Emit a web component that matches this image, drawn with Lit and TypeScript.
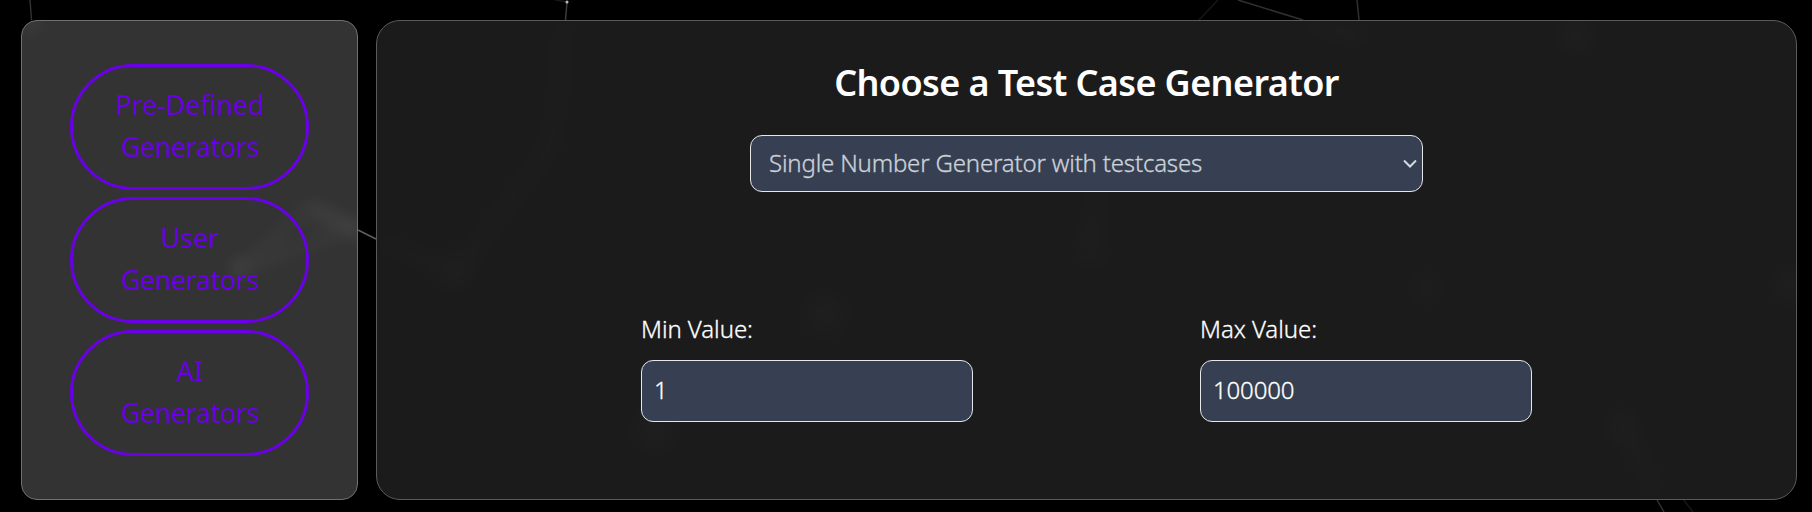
import { LitElement, html, css } from "lit";
import { customElement } from "lit/decorators.js";

const choices = [["Pre-Defined", "pre"], ["User", "user"], ["AI", "ai"]];

@customElement("app-root")
class AppRoot extends LitElement {
  static styles = css`
    :host { display: block; position: relative; width: 1812px; height: 512px; overflow: hidden; background: #000;
      font-family: "Noto Sans", "Open Sans", sans-serif; color: #fff; }
    * { box-sizing: border-box; }
    .net { position: absolute; inset: 0; }
    .layout { position: relative; display: flex; gap: 18px; height: 512px; padding: 20px 15px 12px 21px; }
    .side { width: 337px; border: 1px solid #707070; border-radius: 16px; background: #333;
      padding: 43px 0 0 48px; display: flex; flex-direction: column; gap: 7px; overflow: hidden; position: relative; }
    .main { flex: 1; border: 1px solid #5a5a5a; border-radius: 24px; background: #1b1b1b; overflow: hidden; position: relative;
      display: flex; flex-direction: column; align-items: center; }
    .glow { position: absolute; inset: 0; width: 100%; height: 100%; }
    .soft { filter: blur(8px); }
    .wide { filter: blur(12px); }
    .pill { position: relative; flex: none; width: 239px; height: 126px; border: 3px solid #6a00e8; border-radius: 63px; background: none; padding: 0 0 2px;
      font: 400 27px/42px "Noto Sans", sans-serif; color: #6a00ea; text-align: center; }
    .pill span { display: block; }
    .pre { letter-spacing: -0.15px; }
    .gen { letter-spacing: -0.45px; }
    h1 { position: relative; margin: 37px 0 0; height: 50px; font-size: 36px; line-height: 50px; font-weight: 600; white-space: nowrap; }
    .title { letter-spacing: -0.6px; }
    .select { position: relative; margin-top: 27px; width: 673px; height: 57px; border: 1px solid #e5e7eb; border-radius: 12px; background: #374052;
      display: flex; align-items: center; justify-content: space-between; padding: 0 5px 0 18px; color: #cbd2d9; font-size: 24px; font-weight: 300;
      -webkit-text-stroke: 0.3px; }
    .opt { letter-spacing: -0.18px; padding-bottom: 2px; }
    .fields { position: relative; margin-top: 119px; width: 891px; display: flex; justify-content: space-between; }
    .field { display: flex; flex-direction: column; width: 332px; font-size: 24px; font-weight: 300; letter-spacing: -0.05px; -webkit-text-stroke: 0.3px; }
    .label { line-height: 36px; height: 36px; margin-bottom: 13px; }
    .box { height: 62px; line-height: 58px; border: 1px solid #e5e7eb; border-radius: 12px; background: #374052; padding-left: 12px; letter-spacing: -0.15px; }
  `;
  render() {
    return html`
      <svg class="net" width="1812" height="512" fill="none" stroke="#303030" stroke-width="1.5">
        <path d="M30 0 31.5 20M1238 0 1303 20M1357 0 1359 20M1656.500 499 1664 512"/>
        <path d="M567 2 565.500 20" stroke="#3c3c3c"/>
        <path d="M358 230 376 239" stroke="#606060"/>
        <path d="M1218 0 1199 20M1683 499 1693 512M555 0 567 2" stroke="#161616"/>
        <circle cx="567" cy="2" r="1.500" fill="#bbb" stroke="none"/>
      </svg>
      <div class="layout">
        <nav class="side">
          <svg class="glow" viewBox="22 21 335 478" fill="none">
            <g class="soft" stroke="#fff">
              <path d="M309 207 376 239" stroke-width="12" opacity=".07"/>
              <path d="M238 272 309 207M238 272 357 225" stroke-width="10" opacity=".035"/>
              <circle cx="239" cy="268" r="7" fill="#fff" stroke="none" opacity=".1"/>
              <circle cx="31" cy="24" r="7" fill="#fff" stroke="none" opacity=".08"/>
            </g>
          </svg>
          ${choices.map(([n, c]) => html`<button class="pill"><span class=${c}>${n}</span><span class="gen">Generators</span></button>`)}
        </nav>
        <main class="main">
          <svg class="glow" viewBox="377 21 1419 478" fill="none">
            <g class="wide" stroke="#fff" stroke-width="20" opacity=".014">
              <path d="M376 239 455 274 552 145 565 20M1303 20 1360 38 1358 20M1100 150 1090 245M1622 425 1660 499"/>
              <g fill="#fff" stroke="none">
                <circle cx="455" cy="272" r="22"/><circle cx="1577" cy="36" r="22"/><circle cx="1790" cy="285" r="22"/>
                <circle cx="825" cy="314" r="20"/><circle cx="1090" cy="245" r="18"/><circle cx="1622" cy="425" r="20"/>
                <circle cx="1425" cy="288" r="14"/><circle cx="655" cy="430" r="20"/>
              </g>
            </g>
          </svg>
          <h1><span class="title">Choose a Test Case Generator</span></h1>
          <div class="select"><span class="opt">Single Number Generator with testcases</span>
            <svg width="15" height="10" fill="none" stroke="#d5dae0" stroke-width="2"><path d="M2 1.500 8 7.500 14 1.500"/></svg></div>
          <div class="fields">
            <div class="field"><span class="label">Min Value:</span><div class="box">1</div></div>
            <div class="field"><span class="label">Max Value:</span><div class="box">100000</div></div>
          </div>
        </main>
      </div>`;
  }
}
